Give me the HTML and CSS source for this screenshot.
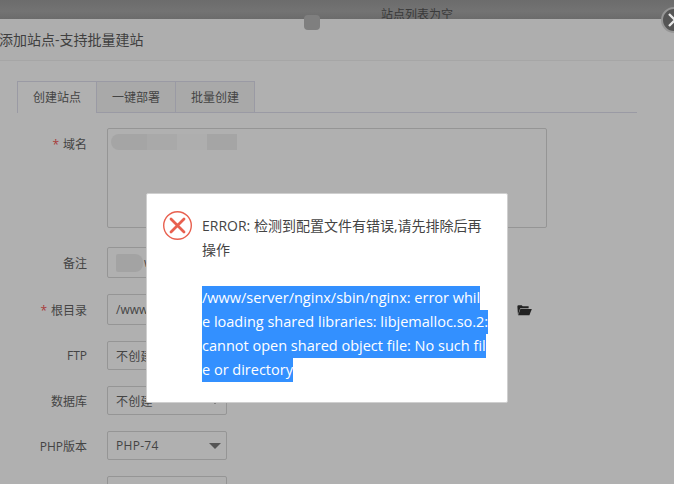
FILE: index.html
```html
<!DOCTYPE html>
<html lang="zh-CN">
<head>
	<meta charset="utf-8">
	<title>添加站点</title>
	<link rel="stylesheet" href="styles.css">
</head>
<body>
	<div class="page-top">
		<span class="empty-text">站点列表为空</span>
	</div>
	<section class="site-modal">
		<h2 class="modal-title">添加站点-支持批量建站</h2>
		<div class="modal-body">
			<ul class="tabs">
				<li class="tab active">创建站点</li>
				<li class="tab">一键部署</li>
				<li class="tab">批量创建</li>
			</ul>
			<div class="row row-first">
				<label class="row-label"><span class="req">*</span>域名</label>
				<div class="textarea">
					<span class="smudge smudge-a"></span><span class="smudge smudge-b"></span><span class="smudge smudge-c"></span><span class="smudge smudge-a2"></span>
				</div>
			</div>
			<div class="row row-remark">
				<label class="row-label">备注</label>
				<div class="field field-wide"><span class="smudge-remark"></span>www</div>
			</div>
			<div class="row">
				<label class="row-label"><span class="req">*</span>根目录</label>
				<div class="field field-wide">/www/wwwroot/</div>
				<svg class="folder" viewBox="0 0 16 12" width="15" height="12">
					<path d="M1 11 L0.4 2.2 Q0.4 1 1.6 1 L5 1 L6 2 L12.4 2 L12.4 4 L3.4 4 Z" fill="#222"/>
					<path d="M3.6 5 L15.8 5 L13.2 11.6 L1.2 11.6 Z" fill="#222"/>
				</svg>
			</div>
			<div class="row">
				<label class="row-label">FTP</label>
				<div class="field select">不创建<span class="caret"></span></div>
			</div>
			<div class="row">
				<label class="row-label">数据库</label>
				<div class="field select">不创建<span class="caret"></span></div>
			</div>
			<div class="row">
				<label class="row-label">PHP版本</label>
				<div class="field select">PHP-74<span class="caret"></span></div>
			</div>
			<div class="row">
				<label class="row-label"></label>
				<div class="field select"></div>
			</div>
		</div>
	</section>
	<span class="spinner"></span>
	<span class="modal-close">
		<svg viewBox="0 0 26 26" width="26" height="26"><path d="M8 7 L14 13 L8 19" fill="none" stroke="#e8e8e8" stroke-width="2.4"/></svg>
	</span>
	<div class="error-box">
		<svg class="error-icon" viewBox="0 0 30 30" width="30" height="30">
			<circle cx="14.5" cy="14.5" r="13.8" fill="none" stroke="#e8604f" stroke-width="1.4"/>
			<path d="M8 8 L21 21 M21 8 L8 21" stroke="#e8604f" stroke-width="2.8" stroke-linecap="round"/>
		</svg>
		<div class="error-text">
			<p>ERROR: 检测到配置文件有错误,请先排除后再<br>操作</p>
			<p class="error-detail">
				<span class="sel">/www/server/nginx/sbin/nginx: error whil</span>
				<span class="sel">e loading shared libraries: libjemalloc.so.2:</span>
				<span class="sel">cannot open shared object file: No such fil</span>
				<span class="sel">e or directory</span>
			</p>
		</div>
	</div>
</body>
</html>
```

FILE: styles.css
```css
html, body {
	margin: 0;
	padding: 0;
	height: 484px;
	overflow: hidden;
}

body {
	background-color: #b0b0b0;
	color: #444444;
	font-family: "Open Sans", "Noto Sans CJK SC", sans-serif;
	font-size: 12px;
}

.page-top {
	height: 19px;
	background: linear-gradient(#6c6c6c, #737373 60%, #6b6b6b);
	overflow: hidden;
	padding-left: 381px;
	box-sizing: border-box;
}

.empty-text {
	display: block;
	line-height: 30px;
	color: #3a3a3a;
}

.site-modal {
	background-color: #b0b0b0;
}

.modal-title {
	margin: 0;
	height: 41px;
	line-height: 42px;
	padding-left: 0;
	text-indent: -1px;
	font-size: 14px;
	font-weight: normal;
	color: #404040;
	background-color: #aeaeae;
	border-bottom: 1px solid #a6a6a6;
}

.modal-body {
	padding: 20px 37px 0 17px;
}

.tabs {
	display: flex;
	margin: 0;
	padding: 0;
	list-style: none;
	height: 32px;
	box-sizing: border-box;
	border-bottom: 1px solid #9a9aa4;
}

.tab {
	width: 79px;
	height: 32px;
	box-sizing: border-box;
	line-height: 32px;
	text-align: center;
	color: #444444;
	background-color: #a9a9a9;
	border: 1px solid #9a9aa4;
	border-left: 0;
}

.tab.active {
	width: 80px;
	background-color: #b0b0b0;
	border-left: 1px solid #9a9aa4;
	border-bottom: 0;
}

.row {
	display: flex;
	align-items: center;
	margin-top: 16px;
}

.row-first {
	align-items: flex-start;
	margin-top: 15px;
}

.row-remark {
	margin-top: 19px;
}

.row-label {
	width: 70px;
	margin-right: 20px;
	text-align: right;
	color: #444444;
}

.row-first .row-label {
	line-height: 34px;
}

.req {
	color: #a83a3a;
	margin-right: 4px;
}

.textarea {
	display: flex;
	width: 440px;
	height: 100px;
	box-sizing: border-box;
	padding: 5px 3px;
	border: 1px solid #959595;
	border-radius: 2px;
}

.smudge {
	width: 30px;
	height: 16px;
	background-color: #a5a5a5;
}

.smudge-a {
	width: 36px;
	border-radius: 8px 0 0 8px;
}

.smudge-b {
	background-color: #a9a9a9;
}

.smudge-c {
	background-color: #aeaeae;
}

.smudge-remark {
	width: 27px;
	height: 18px;
	margin-right: 1px;
	background-color: #a3a3a3;
	border-radius: 2px 8px 8px 2px;
}

.field {
	display: flex;
	align-items: center;
	height: 31px;
	box-sizing: border-box;
	padding-left: 8px;
	border: 1px solid #959595;
	border-radius: 2px;
	color: #444444;
}

.field-wide {
	width: 392px;
}

.select {
	position: relative;
	width: 120px;
	height: 29px;
	letter-spacing: 0.3px;
}

.caret {
	position: absolute;
	top: 11px;
	right: 5px;
	border-style: solid;
	border-width: 6px 6px 0;
	border-color: #555555 transparent transparent;
}

.folder {
	margin-left: 18px;
}

.spinner {
	position: absolute;
	left: 304px;
	top: 15px;
	width: 16px;
	height: 15px;
	background-color: #7f7f7f;
	border-radius: 4px;
}

.modal-close {
	position: absolute;
	left: 661px;
	top: 7px;
	width: 26px;
	height: 26px;
	box-sizing: border-box;
	background-color: #555555;
	border: 2px solid #969696;
	border-radius: 50%;
}

.modal-close svg {
	display: block;
	margin: -2px;
}

.error-box {
	position: absolute;
	left: 146px;
	top: 193px;
	display: flex;
	gap: 9px;
	width: 362px;
	height: 210px;
	box-sizing: border-box;
	padding: 17px 16px;
	background-color: #ffffff;
	border: 1px solid #cfcfcf;
	border-radius: 2px;
	font-size: 14px;
	line-height: 24px;
	color: #444444;
}

.error-icon {
	flex: none;
}

.error-text {
	flex: 1;
	padding-top: 3px;
	white-space: nowrap;
}

.error-text p {
	margin: 0;
}

.error-detail {
	padding-top: 24px;
}

.sel {
	display: block;
	width: fit-content;
	background-color: #3390ff;
	color: #ffffff;
	font-size: 14.5px;
}
```
